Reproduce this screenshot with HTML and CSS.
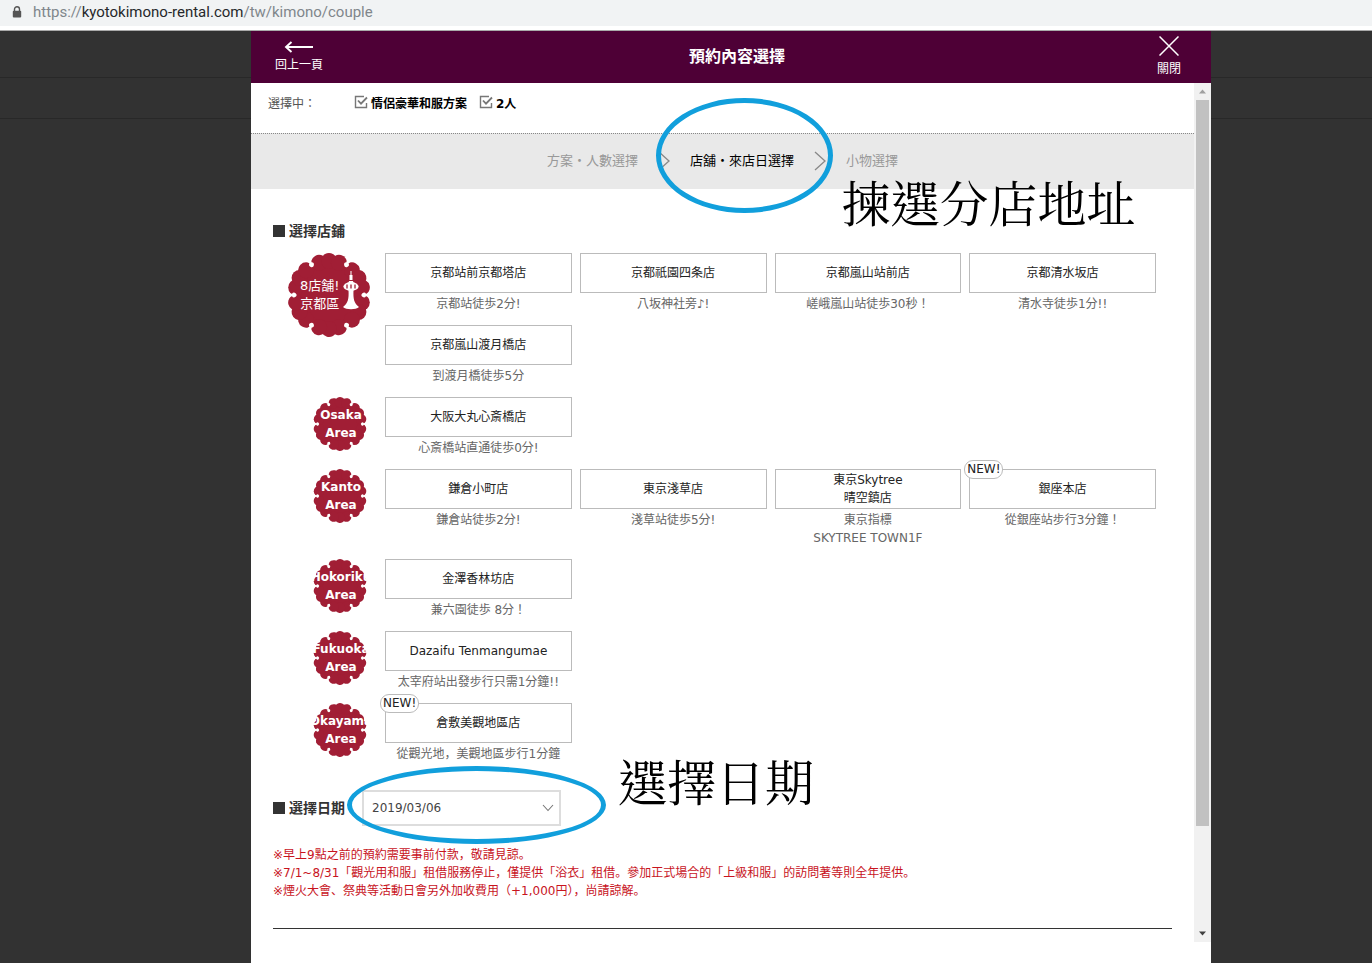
FILE: index.html
```html
<!DOCTYPE html>
<html lang="ja">
<head>
<meta charset="utf-8">
<title>預約內容選擇</title>
<link rel="stylesheet" href="styles.css">
</head>
<body>
<svg class="defs" aria-hidden="true">
  <defs>
    <symbol id="crest" viewBox="0 0 84 84">
      <g fill="#a11e35">
        <circle cx="42" cy="42" r="38"/>
        <g id="sector">
          <circle cx="74.800" cy="49.500" r="8"/>
          <circle cx="71.400" cy="59" r="8"/>
          <circle cx="64.900" cy="66.700" r="8"/>
        </g>
        <use href="#sector" transform="rotate(60 42 42)"/>
        <use href="#sector" transform="rotate(120 42 42)"/>
        <use href="#sector" transform="rotate(180 42 42)"/>
        <use href="#sector" transform="rotate(240 42 42)"/>
        <use href="#sector" transform="rotate(300 42 42)"/>
      </g>
      <g fill="#fff">
        <path id="notch" d="M84 39.500L79 40.700A2.400 2.400 0 1 0 79 43.300L84 44.500Z"/>
        <use href="#notch" transform="rotate(60 42 42)"/>
        <use href="#notch" transform="rotate(120 42 42)"/>
        <use href="#notch" transform="rotate(180 42 42)"/>
        <use href="#notch" transform="rotate(240 42 42)"/>
        <use href="#notch" transform="rotate(300 42 42)"/>
      </g>
    </symbol>
    <symbol id="check" viewBox="0 0 14 14">
      <path d="M10 1.500H1.500v11h11V8" fill="none" stroke="#777" stroke-width="1.400"/>
      <path d="M4 5.500l3 3.200L13 2.500" fill="none" stroke="#777" stroke-width="1.800"/>
    </symbol>
    <symbol id="chevron" viewBox="0 0 12 20">
      <path d="M1 1l10 9L1 19" fill="none" stroke="#888" stroke-width="1.300"/>
    </symbol>
  </defs>
</svg>

<div class="address">
  <svg class="lock" viewBox="0 0 10 12" aria-hidden="true"><path d="M2.500 5V3.300a2.500 2.500 0 0 1 5 0V5" fill="none" stroke="#555" stroke-width="1.400"/><rect x="0.800" y="4.700" width="8.400" height="6.800" rx="1" fill="#555"/></svg>
  <span class="url">https://<b>kyotokimono-rental.com</b>/tw/kimono/couple</span>
</div>

<div class="backdrop">
  <main class="modal">
    <header class="bar">
      <button class="bar-btn" type="button">
        <svg class="arrow" viewBox="0 0 30 12" aria-hidden="true"><path d="M2 6h27M7.500 1L2 6l5.500 5" fill="none" stroke="#fff" stroke-width="1.900"/></svg>
        <span>回上一頁</span>
      </button>
      <h1>預約內容選擇</h1>
      <button class="bar-btn" type="button">
        <svg class="cross" viewBox="0 0 20 20" aria-hidden="true"><path d="M.5.5l19 19M19.500.5l-19 19" fill="none" stroke="#fff" stroke-width="1.500"/></svg>
        <span>關閉</span>
      </button>
    </header>

    <div class="viewport">
      <div class="scroll">
        <div class="chosen">
          <span class="chosen-label">選擇中：</span>
          <span class="pick"><svg aria-hidden="true"><use href="#check"/></svg>情侶豪華和服方案</span>
          <span class="pick"><svg aria-hidden="true"><use href="#check"/></svg>2人</span>
        </div>

        <nav class="steps">
          <span>方案・人數選擇</span>
          <svg aria-hidden="true"><use href="#chevron"/></svg>
          <span class="current">店舖・來店日選擇</span>
          <svg aria-hidden="true"><use href="#chevron"/></svg>
          <span>小物選擇</span>
          <i class="ring ring-step"></i>
          <span class="note note-step">揀選分店地址</span>
        </nav>

        <div class="content">
          <h2>選擇店鋪</h2>

          <div class="areas">
            <section class="area">
              <div class="crest crest-large">
                <svg class="crest-shape" aria-hidden="true"><use href="#crest"/></svg>
                <span>8店舗!<br>京都區</span>
                <svg class="tower" viewBox="0 0 18 40" aria-hidden="true"><path d="M8.500 0h1v4h1v5h-3V4h1zM7 10h4l.5 2H6.500zM6.500 19h5c-.4 9 .5 13 5.500 17-3 3-13 3-16 0 5-4 6-8 5.500-17z" fill="#fff"/><ellipse cx="9" cy="15.500" rx="7.600" ry="4.400" fill="#fff"/><path d="M5 13.500v4M9 13.500v4M13 13.500v4" stroke="#a11e35" stroke-width="1.300"/></svg>
              </div>
              <div class="shops">
                <div class="shop"><button type="button">京都站前京都塔店</button><p>京都站徒歩2分!</p></div>
                <div class="shop"><button type="button">京都祇園四条店</button><p>八坂神社旁♪!</p></div>
                <div class="shop"><button type="button">京都嵐山站前店</button><p>嵯峨嵐山站徒歩30秒！</p></div>
                <div class="shop"><button type="button">京都清水坂店</button><p>清水寺徒歩1分!!</p></div>
                <div class="shop"><button type="button">京都嵐山渡月橋店</button><p>到渡月橋徒歩5分</p></div>
              </div>
            </section>

            <section class="area">
              <div class="crest"><svg class="crest-shape" aria-hidden="true"><use href="#crest"/></svg><span>Osaka<br>Area</span></div>
              <div class="shops">
                <div class="shop"><button type="button">大阪大丸心斎橋店</button><p>心斎橋站直通徒歩0分!</p></div>
              </div>
            </section>

            <section class="area">
              <div class="crest"><svg class="crest-shape" aria-hidden="true"><use href="#crest"/></svg><span>Kanto<br>Area</span></div>
              <div class="shops">
                <div class="shop"><button type="button">鎌倉小町店</button><p>鎌倉站徒歩2分!</p></div>
                <div class="shop"><button type="button">東京淺草店</button><p>淺草站徒歩5分!</p></div>
                <div class="shop"><button type="button">東京Skytree<br>晴空鎮店</button><p>東京指標<br>SKYTREE TOWN1F</p></div>
                <div class="shop"><em class="new">NEW!</em><button type="button">銀座本店</button><p>從銀座站步行3分鐘！</p></div>
              </div>
            </section>

            <section class="area">
              <div class="crest"><svg class="crest-shape" aria-hidden="true"><use href="#crest"/></svg><span>Hokoriku<br>Area</span></div>
              <div class="shops">
                <div class="shop"><button type="button">金澤香林坊店</button><p>兼六園徒歩 8分！</p></div>
              </div>
            </section>

            <section class="area">
              <div class="crest"><svg class="crest-shape" aria-hidden="true"><use href="#crest"/></svg><span>Fukuoka<br>Area</span></div>
              <div class="shops">
                <div class="shop"><button type="button">Dazaifu Tenmangumae</button><p>太宰府站出發步行只需1分鐘!!</p></div>
              </div>
            </section>

            <section class="area">
              <div class="crest"><svg class="crest-shape" aria-hidden="true"><use href="#crest"/></svg><span>Okayama<br>Area</span></div>
              <div class="shops">
                <div class="shop"><em class="new">NEW!</em><button type="button">倉敷美觀地區店</button><p>從觀光地，美觀地區步行1分鐘</p></div>
              </div>
            </section>
          </div>

          <div class="date">
            <h2><label for="visit-date">選擇日期</label></h2>
            <div class="select">
              <select id="visit-date"><option>2019/03/06</option></select>
              <svg viewBox="0 0 12 8" aria-hidden="true"><path d="M1 1l5 5.500L11 1" fill="none" stroke="#777" stroke-width="1.100"/></svg>
            </div>
            <i class="ring ring-date"></i>
            <span class="note note-date">選擇日期</span>
          </div>

          <ul class="warnings">
            <li>※早上9點之前的預約需要事前付款，敬請見諒。</li>
            <li>※7/1~8/31「觀光用和服」租借服務停止，僅提供「浴衣」租借。參加正式場合的「上級和服」的訪問著等則全年提供。</li>
            <li>※煙火大會、祭典等活動日會另外加收費用（+1,000円），尚請諒解。</li>
          </ul>
          <hr>
        </div>
      </div>

      <div class="scrollbar" aria-hidden="true">
        <svg viewBox="0 0 17 17"><path d="M5 10.500h7L8.500 6.500z" fill="#a0a0a0"/></svg>
        <div class="track"><div class="thumb"></div></div>
        <svg viewBox="0 0 17 17"><path d="M5 6.500h7l-3.500 4z" fill="#404040"/></svg>
      </div>
    </div>
  </main>
</div>
</body>
</html>
```

FILE: styles.css
```css
* { box-sizing: border-box; }

body {
  margin: 0;
  min-height: 100vh;
  display: flex;
  flex-direction: column;
  font: 12px/18px "DejaVu Sans", "Noto Sans CJK JP", sans-serif;
  color: #222;
  background: #323232;
}

h1, h2, p, ul { margin: 0; padding: 0; }
button, select { font: inherit; color: inherit; }
.defs { position: absolute; width: 0; height: 0; }

/* Address bar */
.address {
  display: flex;
  align-items: center;
  gap: 11px;
  height: 31px;
  padding: 0 12px 6px;
  background: linear-gradient(#f1f3f4 26px, #fff 26px);
  border-bottom: 1px solid #aaa;
}
.lock { width: 10px; height: 12px; }
.url { font: 15px/20px Roboto, sans-serif; color: #80868b; }
.url b { font-weight: 400; color: #26282b; }

/* Dimmed page and modal */
.backdrop {
  flex: 1;
  display: grid;
  grid-template-columns: 251fr 960fr 161fr;
  background:
    linear-gradient(#282828, #282828) 0 46px / 100% 1px no-repeat,
    linear-gradient(#282828, #282828) 0 87px / 100% 1px no-repeat,
    #323232;
}
.modal { grid-column: 2; background: #fff; }

.bar {
  display: grid;
  grid-template-columns: 1fr auto 1fr;
  align-items: center;
  height: 52px;
  padding: 0 30px 0 24px;
  color: #fff;
  background: #4e0036;
}
.bar h1 { padding-left: 18px; font-size: 16px; line-height: 24px; }
.bar-btn {
  display: flex;
  flex-direction: column;
  align-items: center;
  justify-self: start;
  gap: 3px;
  padding: 0;
  border: 0;
  background: none;
}
.bar-btn:last-child { justify-self: end; gap: 4px; }
.arrow { width: 30px; height: 12px; }
.cross { width: 20px; height: 20px; }

.viewport { display: flex; }
.scroll { flex: 1; min-width: 0; }

/* Current choices */
.chosen {
  display: flex;
  gap: 12px;
  height: 50px;
  padding: 12px 17px;
}
.chosen-label { width: 74px; color: #555; }
.pick { display: flex; gap: 3px; font-weight: 700; color: #000; }
.pick svg { width: 14px; height: 14px; }

/* Steps */
.steps {
  position: relative;
  display: flex;
  align-items: center;
  justify-content: center;
  gap: 20px;
  height: 56px;
  padding-bottom: 2px;
  border-top: 1px dotted #888;
  background: #e9e9e9;
  font-size: 13px;
  color: #999;
}
.steps svg { width: 12px; height: 20px; }
.steps .current { color: #000; }

/* Hand-drawn style markers laid over the form */
.ring {
  position: absolute;
  border: 5px solid #119fdc;
  border-radius: 50%;
  pointer-events: none;
}
.ring-step { left: calc(50% - 67px); top: -36px; width: 177px; height: 115px; }
.ring-date { left: 74px; top: -24px; width: 259px; height: 78px; }
.note {
  position: absolute;
  font: 400 49px/60px "Noto Serif CJK TC", "Noto Sans CJK TC", serif;
  color: #000;
  white-space: nowrap;
  pointer-events: none;
}
.note-step { left: calc(50% + 119px); top: 37px; }
.note-date { left: 345px; top: -40px; }

.content { padding: 32px 22px 13px; }
h2 {
  display: flex;
  align-items: center;
  gap: 4px;
  font-size: 14px;
  line-height: 20px;
  color: #333;
}
h2::before { content: ""; width: 12px; height: 12px; background: #333; }

/* Areas and shops */
.areas { display: grid; gap: 12px; margin-top: 12px; }
.area {
  display: grid;
  grid-template-columns: 94px 1fr;
  gap: 18px;
  padding-right: 16px;
}
.crest {
  position: relative;
  display: flex;
  justify-content: center;
  justify-self: end;
  width: 54px;
  height: 54px;
  padding: 9px 0 0 2px;
  overflow: hidden;
  font-weight: 700;
  text-align: center;
  color: #fff;
}
.crest span { position: relative; }
.crest-shape { position: absolute; inset: 0; width: 100%; height: 100%; }
.crest-large {
  justify-content: flex-start;
  justify-self: center;
  align-items: center;
  gap: 3px;
  width: 84px;
  height: 84px;
  margin-left: 18px;
  padding: 0 0 0 13px;
  font-size: 13px;
  font-weight: 400;
}
.tower { position: relative; width: 18px; height: 40px; margin-bottom: 8px; }

.shops {
  display: grid;
  grid-template-columns: repeat(4, 1fr);
  gap: 12px 8px;
}
.shop { position: relative; text-align: center; }
.shop button {
  display: block;
  width: 100%;
  height: 40px;
  padding: 0;
  border: 1px solid #bbb;
  background: #fff;
}
.shop p { padding-top: 2px; color: #666; white-space: nowrap; }
.new {
  position: absolute;
  left: -5px;
  top: -9px;
  padding: 0 2px;
  border: 1px solid #bbb;
  border-radius: 9px;
  background: #fff;
  font-style: normal;
  line-height: 17px;
}

/* Date */
.date {
  position: relative;
  display: flex;
  align-items: center;
  gap: 17px;
  margin-top: 27px;
}
.select { position: relative; }
.select select {
  appearance: none;
  width: 199px;
  height: 36px;
  padding: 0 8px;
  border: 2px solid #ddd;
  border-radius: 0;
  background: #fff;
  color: #444;
}
.select svg { position: absolute; right: 7px; top: 14px; width: 12px; height: 8px; }

.warnings { margin-top: 20px; list-style: none; color: #c8141e; }
hr { margin: 28px 0 0; border: 0; border-top: 1px solid #333; }

/* Scrollbar */
.scrollbar {
  display: flex;
  flex-direction: column;
  width: 17px;
  background: #f1f1f1;
}
.scrollbar svg { width: 17px; height: 17px; }
.track { flex: 1; padding: 0 2px; }
.thumb { height: 88%; background: #c1c1c1; }
```
